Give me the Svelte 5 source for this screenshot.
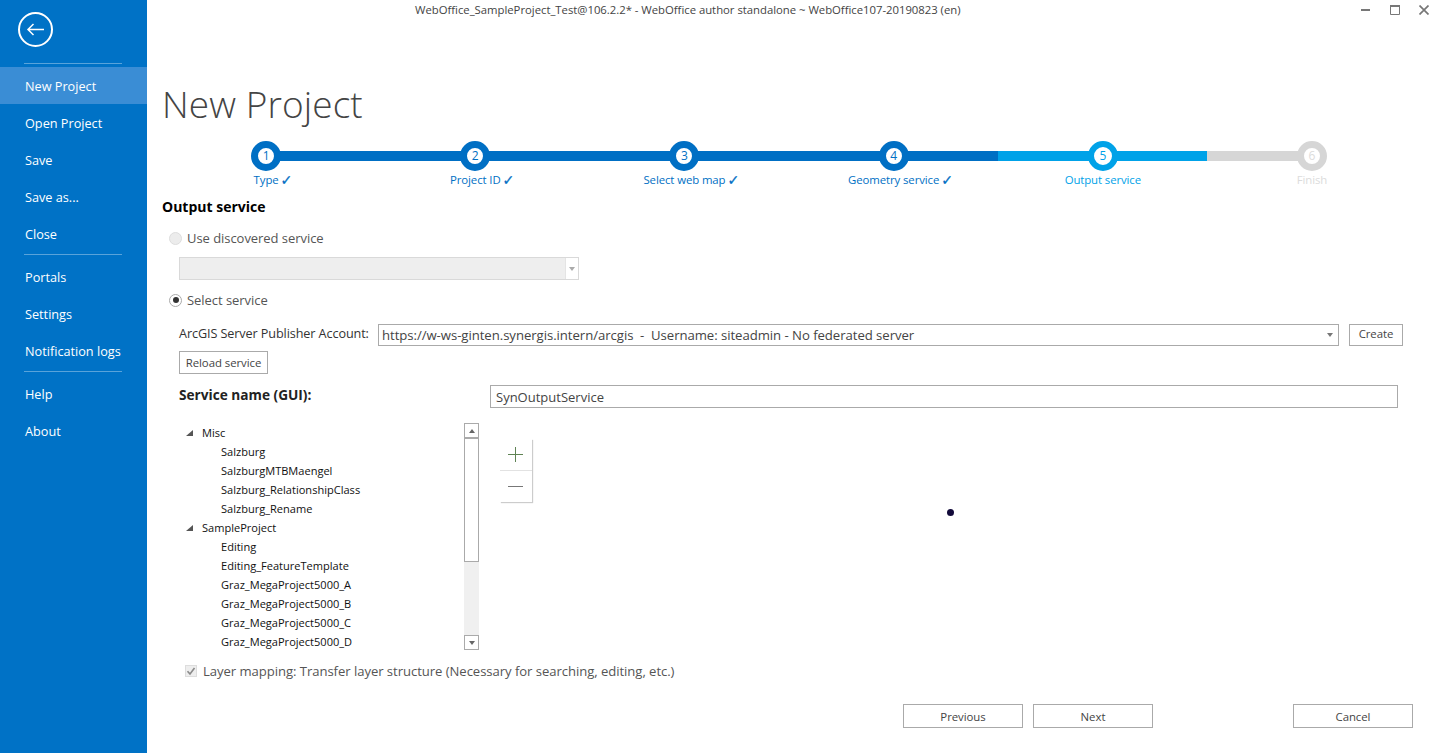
<script>
	const nav = [
		['New Project', 'Open Project', 'Save', 'Save as...', 'Close'],
		['Portals', 'Settings', 'Notification logs'],
		['Help', 'About']
	];
	const steps = [
		{ n: 1, label: 'Type', done: true, state: 'done' },
		{ n: 2, label: 'Project ID', done: true, state: 'done' },
		{ n: 3, label: 'Select web map', done: true, state: 'done' },
		{ n: 4, label: 'Geometry service', done: true, state: 'done' },
		{ n: 5, label: 'Output service', done: false, state: 'current' },
		{ n: 6, label: 'Finish', done: false, state: 'todo' }
	];
	const tree = [
		{ name: 'Misc', kids: ['Salzburg', 'SalzburgMTBMaengel', 'Salzburg_RelationshipClass', 'Salzburg_Rename'] },
		{ name: 'SampleProject', kids: ['Editing', 'Editing_FeatureTemplate', 'Graz_MegaProject5000_A', 'Graz_MegaProject5000_B', 'Graz_MegaProject5000_C', 'Graz_MegaProject5000_D'] }
	];
</script>

<div class="window">
	<aside class="side">
		<div class="back">
			<svg width="36" height="36" viewBox="0 0 36 36" fill="none" stroke="#fff">
				<circle cx="17.5" cy="17.5" r="16.5" stroke-width="2" />
				<path d="M9.500 17.500H26M15.500 12l-5.500 5.500 5.500 5.500" stroke-width="1.500" />
			</svg>
		</div>
		{#each nav as group, i}
			<div class="rule" class:first={i === 0}></div>
			{#each group as item}
				<div class="nav-item" class:active={item === 'New Project'}>{item}</div>
			{/each}
		{/each}
	</aside>

	<main class="main">
		<header class="titlebar">
			<div class="title-text">WebOffice_SampleProject_Test@106.2.2* - WebOffice author standalone ~ WebOffice107-20190823 (en)</div>
			<div class="controls">
				<svg width="10" height="10" viewBox="0 0 10 10"><path d="M0 5h9" stroke="#777" stroke-width="2" /></svg>
				<svg width="10" height="10" viewBox="0 0 10 10" fill="none" stroke="#777"><path d="M.5 1h9v8.500h-9z" /><path d="M0 1h10" stroke-width="2" /></svg>
				<svg width="10" height="10" viewBox="0 0 10 10" fill="none" stroke="#777" stroke-width="1.7"><path d="M.5.5l9 9M9.500.5l-9 9" /></svg>
			</div>
		</header>

		<h1 class="page-title">New Project</h1>

		<div class="stepper">
			{#each steps as s}
				<div class="step {s.state}">
					<div class="track"></div>
					<div class="circle"><span>{s.n}</span></div>
					<div class="step-label">{s.label}{#if s.done}<span class="tick">✓</span>{/if}</div>
				</div>
			{/each}
		</div>

		<h2 class="section">Output service</h2>

		<div class="radio-row">
			<span class="radio off"></span><span>Use discovered service</span>
		</div>
		<div class="select-off">
			<div class="select-arrow"><i></i></div>
		</div>
		<div class="radio-row second">
			<span class="radio on"></span><span>Select service</span>
		</div>

		<div class="account">
			<span class="account-label">ArcGIS Server Publisher Account:</span>
			<div class="combo">
				<span>https://w-ws-ginten.synergis.intern/arcgis  -  Username: siteadmin - No federated server</span>
				<i></i>
			</div>
			<button class="btn create">Create</button>
		</div>
		<button class="btn reload">Reload service</button>

		<div class="name-row">
			<span class="name-label">Service name (GUI):</span>
			<div class="name-input">SynOutputService</div>
		</div>

		<div class="body-row">
			<div class="tree">
				<div class="tree-list">
					{#each tree as node}
						<div class="tree-row parent"><i></i>{node.name}</div>
						{#each node.kids as kid}
							<div class="tree-row child">{kid}</div>
						{/each}
					{/each}
				</div>
				<div class="scroll">
					<div class="scroll-btn"><i class="up"></i></div>
					<div class="thumb"></div>
					<div class="scroll-fill"></div>
					<div class="scroll-btn"><i class="down"></i></div>
				</div>
			</div>
			<div class="map">
				<div class="zoom">
					<div class="zoom-btn">
						<svg width="16" height="16" viewBox="0 0 16 16"><path d="M7.500 1v15M0 8.500h15" stroke="#5f8354" /></svg>
					</div>
					<div class="zoom-btn">
						<svg width="16" height="16" viewBox="0 0 16 16"><path d="M0 8.500h15" stroke="#777" /></svg>
					</div>
				</div>
				<div class="dot"></div>
			</div>
		</div>

		<div class="check-row">
			<span class="check">
				<svg width="10" height="10" viewBox="0 0 10 10" fill="none"><path d="M1.500 5.200L4 8l4.500-6" stroke="#8a8a8a" stroke-width="1.600" /></svg>
			</span>
			<span>Layer mapping: Transfer layer structure (Necessary for searching, editing, etc.)</span>
		</div>

		<footer class="footer">
			<button class="btn wide">Previous</button>
			<button class="btn wide">Next</button>
			<button class="btn wide cancel">Cancel</button>
		</footer>
	</main>
</div>

<style>
	:global(body) {
		margin: 0;
		background: #fff;
	}

	.window {
		display: flex;
		height: 753px;
		overflow: hidden;
		font-family: "Open Sans", "Noto Sans", sans-serif;
		font-size: 12px;
		color: #444;
	}

	/* sidebar */
	.side {
		width: 147px;
		flex: none;
		background: #0072c6;
		color: #fff;
	}
	.back {
		height: 46px;
		padding: 12px 0 0 18px;
	}
	.back svg {
		display: block;
	}
	.rule {
		height: 1px;
		margin: 2px 25px 3px 24px;
		background: rgba(255, 255, 255, 0.35);
	}
	.rule.first {
		margin: 5px 25px 3px 24px;
	}
	.nav-item {
		height: 37px;
		line-height: 39px;
		padding-left: 25px;
		font-size: 12.7px;
	}
	.nav-item.active {
		background: #3a8dd5;
	}

	/* content */
	.main {
		flex: 1;
		min-width: 0;
		display: flex;
		flex-direction: column;
		padding-left: 15px;
	}
	.titlebar {
		height: 20px;
		display: flex;
		justify-content: space-between;
	}
	.title-text {
		margin-left: 253px;
		font-size: 11.33px;
		line-height: 19px;
		letter-spacing: -0.02px;
		color: #444;
		white-space: nowrap;
	}
	.controls {
		display: flex;
		gap: 19px;
		padding: 5px 5px 0 0;
	}
	.controls svg {
		display: block;
	}
	.page-title {
		margin: 59px 0 0 0;
		height: 50px;
		font-size: 37px;
		line-height: 50px;
		font-weight: 300;
		letter-spacing: 0.1px;
		color: #444;
	}

	/* stepper */
	.stepper {
		display: grid;
		grid-template-columns: repeat(6, 209.2px);
		height: 55px;
		margin: 12px 0 0 -0.5px;
	}
	.step {
		position: relative;
		display: flex;
		flex-direction: column;
		align-items: center;
		--c: #006fc4;
	}
	.step.current {
		--c: #00a2e8;
	}
	.step.todo {
		--c: #d6d6d6;
	}
	.track {
		position: absolute;
		top: 10px;
		left: 0;
		right: 0;
		height: 10px;
		background: var(--c);
	}
	.step:first-child .track {
		left: 50%;
	}
	.step:last-child .track {
		right: 50%;
	}
	.circle {
		position: relative;
		width: 30px;
		height: 30px;
		box-sizing: border-box;
		border: 7px solid var(--c);
		border-radius: 50%;
		background: #fff;
		color: var(--c);
		text-align: center;
		font-size: 12px;
		line-height: 16px;
	}
	.step.current .circle {
		border-width: 6px;
		line-height: 18px;
	}
	.step-label {
		position: relative;
		margin-top: 1px;
		font-size: 11.4px;
		line-height: 16px;
		letter-spacing: -0.1px;
		color: var(--c);
		white-space: nowrap;
	}
	.step.todo .step-label,
	.step.todo .circle {
		color: #dcdcdc;
	}
	.tick {
		position: absolute;
		left: calc(100% + 2px);
		top: 0;
		font-family: "DejaVu Sans", sans-serif;
		font-size: 14px;
		-webkit-text-stroke: 0.3px var(--c);
	}

	/* form */
	.section {
		margin: 0;
		height: 22px;
		font-size: 14px;
		line-height: 22px;
		font-weight: 700;
		color: #000;
	}
	.radio-row {
		display: flex;
		align-items: center;
		height: 20px;
		margin: 10px 0 0 7px;
		font-size: 13px;
		letter-spacing: -0.05px;
		color: #555;
	}
	.radio-row.second {
		margin-top: 10px;
	}
	.radio {
		position: relative;
		width: 13px;
		height: 13px;
		margin-right: 5px;
		box-sizing: border-box;
		border: 1px solid #aaa;
		border-radius: 50%;
		background: #fff;
	}
	.radio.off {
		border-color: #ddd;
		background: #ececec;
	}
	.radio.on::after {
		content: "";
		position: absolute;
		inset: 2.5px;
		border-radius: 50%;
		background: #333;
	}
	.select-off {
		width: 400px;
		height: 23px;
		margin: 9px 0 0 17px;
		box-sizing: border-box;
		border: 1px solid #d9d9d9;
		background: #eee;
		display: flex;
		justify-content: flex-end;
	}
	.select-arrow {
		width: 12px;
		background: #fff;
		border-left: 1px solid #e4e4e4;
		display: flex;
		align-items: center;
		justify-content: center;
	}
	.select-arrow i,
	.combo i {
		width: 0;
		height: 0;
		border-left: 3.5px solid transparent;
		border-right: 3.5px solid transparent;
		border-top: 4px solid #aaa;
	}
	.account {
		display: flex;
		align-items: center;
		margin: 14px 0 0 17px;
		height: 22px;
		width: 1224px;
	}
	.account-label {
		width: 199px;
		flex: none;
		margin-top: -5px;
		color: #333;
		font-size: 12.65px;
		letter-spacing: -0.1px;
		white-space: nowrap;
	}
	.combo {
		width: 961px;
		height: 22px;
		flex: none;
		box-sizing: border-box;
		border: 1px solid #aaa;
		padding: 0 5px 0 3px;
		display: flex;
		align-items: center;
		justify-content: space-between;
		font-size: 13.17px;
		letter-spacing: -0.05px;
		white-space: pre;
		color: #444;
	}
	.combo i {
		border-top-color: #777;
	}
	.btn {
		box-sizing: border-box;
		border: 1px solid #aaa;
		background: #fff;
		color: #444;
		padding: 0;
		font: inherit;
		font-size: 11.4px;
		letter-spacing: -0.05px;
	}
	.create {
		width: 54px;
		height: 22px;
		margin-left: 10px;
		padding-bottom: 3px;
		flex: none;
	}
	.reload {
		width: 89px;
		height: 23px;
		margin: 5px 0 0 17px;
	}
	.name-row {
		display: flex;
		align-items: center;
		margin: 11px 0 0 17px;
		height: 23px;
	}
	.name-label {
		width: 311px;
		flex: none;
		margin-top: -5px;
		font-size: 13.65px;
		font-weight: 700;
		color: #222;
	}
	.name-input {
		width: 908px;
		height: 23px;
		box-sizing: border-box;
		border: 1px solid #aaa;
		padding-left: 5px;
		font-size: 13px;
		line-height: 23px;
		color: #444;
	}

	/* tree and map */
	.body-row {
		display: flex;
		margin: 15px 0 0 17px;
		height: 227px;
	}
	.tree {
		width: 300px;
		flex: none;
		display: flex;
	}
	.tree-list {
		width: 286px;
	}
	.tree-row {
		height: 19px;
		line-height: 19px;
		font-size: 11.05px;
		color: #111;
		white-space: nowrap;
	}
	.tree-row.parent {
		position: relative;
		padding-left: 23px;
	}
	.tree-row.parent i {
		position: absolute;
		left: 7px;
		top: 7px;
		width: 0;
		height: 0;
		border-left: 7px solid transparent;
		border-bottom: 6px solid #555;
	}
	.tree-row.child {
		padding-left: 42px;
	}
	.scroll {
		width: 15px;
		flex: none;
		display: flex;
		flex-direction: column;
		background: #f0f0f0;
	}
	.scroll-btn {
		height: 15px;
		box-sizing: border-box;
		border: 1px solid #aaa;
		background: #fff;
		display: flex;
		align-items: center;
		justify-content: center;
	}
	.scroll-btn i {
		width: 0;
		height: 0;
		border-left: 3.5px solid transparent;
		border-right: 3.5px solid transparent;
	}
	.scroll-btn .up {
		border-bottom: 4px solid #666;
	}
	.scroll-btn .down {
		border-top: 4px solid #666;
	}
	.thumb {
		height: 124px;
		box-sizing: border-box;
		border: 1px solid #aaa;
		background: #fff;
	}
	.scroll-fill {
		flex: 1;
	}
	.map {
		position: relative;
		flex: 1;
		padding: 16px 0 0 21px;
	}
	.zoom {
		width: 32px;
		background: #fff;
		box-shadow: 1px 1px 1px rgba(0, 0, 0, 0.2);
	}
	.zoom-btn {
		height: 24px;
		padding: 7px 0 0 8px;
		border-bottom: 1px solid #e2e2e2;
	}
	.zoom-btn:last-child {
		border-bottom: none;
	}
	.zoom-btn svg {
		display: block;
	}
	.dot {
		position: absolute;
		left: 468px;
		top: 86px;
		width: 7px;
		height: 7px;
		border-radius: 50%;
		background: #120a3a;
	}

	.check-row {
		display: flex;
		align-items: center;
		height: 20px;
		margin: 11px 0 0 23px;
		font-size: 13.1px;
		letter-spacing: -0.05px;
		color: #555;
	}
	.check {
		width: 12px;
		height: 12px;
		margin-right: 6px;
		box-sizing: border-box;
		border: 1px solid #ddd;
		background: #eee;
		display: flex;
		align-items: center;
		justify-content: center;
	}
	.check svg {
		display: block;
	}
	.footer {
		display: flex;
		gap: 10px;
		margin: 23px 0 0 741px;
	}
	.wide {
		width: 120px;
		height: 24px;
	}
	.cancel {
		margin-left: 130px;
	}
</style>
